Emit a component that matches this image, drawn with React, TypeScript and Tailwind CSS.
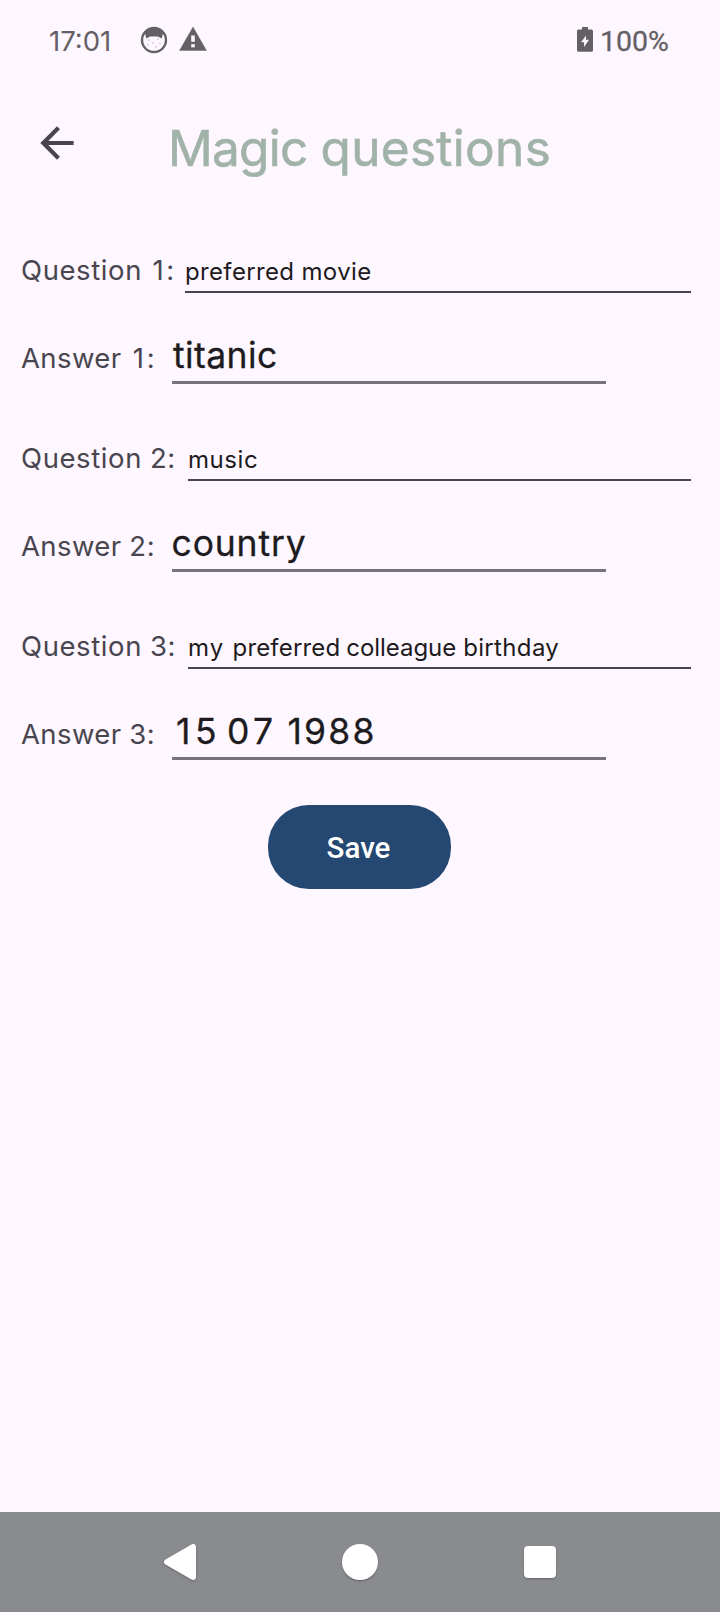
import type { ReactNode } from "react";

type Item = {
  id: string;
  label: ReactNode;
  answerLabel: ReactNode;
  question: ReactNode;
  answer: ReactNode;
  questionClass: string;
  answerClass: string;
};

const items: Item[] = [
  {
    id: "1",
    label: <span className="ml-[2px] tracking-[2.8px]">1:</span>,
    answerLabel: <span className="ml-[3px] tracking-[2.8px]">1:</span>,
    question: "preferred movie",
    answer: "titanic",
    questionClass: "w-[506px] tracking-[0.35px]",
    answerClass: "pl-[1px] tracking-[0.42px]",
  },
  {
    id: "2",
    label: <span className="-ml-[0.5px] tracking-[0.6px]">2:</span>,
    answerLabel: <span className="-ml-[0.5px] tracking-[0.7px]">2:</span>,
    question: "music",
    answer: <span className="-ml-[0.5px]">country</span>,
    questionClass: "w-[503px] tracking-[0.58px]",
    answerClass: "tracking-[0.85px]",
  },
  {
    id: "3",
    label: <span className="-ml-[0.5px] tracking-[0.6px]">3:</span>,
    answerLabel: <span className="-ml-[0.5px] tracking-[0.7px]">3:</span>,
    question: (
      <>
        <span className="tracking-[1.2px]">my</span>{" "}
        <span className="ml-[1px]">preferred</span>{" "}
        <span className="-ml-[1px] tracking-[-0.05px]">colleague</span>{" "}
        <span className="tracking-[0.35px]">birthday</span>
      </>
    ),
    answer: (
      <>
        <span className="tracking-[4.5px]">15</span>{" "}
        <span className="-ml-[4px] tracking-[4.3px]">07</span>{" "}
        <span className="tracking-[2.2px]">1988</span>
      </>
    ),
    questionClass: "w-[503px] tracking-[0.18px]",
    answerClass: "pl-[4px]",
  },
];

const CatIcon = () => (
  <svg width="28" height="28" viewBox="0 0 28 28">
    <circle cx="14" cy="14" r="12" fill="#fef7ff" stroke="#646166" strokeWidth="2.4" />
    <path
      d="M3 9 C7 0.5 21 0.5 25 9 L22.8 8 L21.8 12.5 L17.8 10.5 H10.2 L6.2 12.5 L5.2 8 Z"
      fill="#646166"
    />
    <g fill="#b5b0b6">
      <circle cx="9" cy="14" r="0.8" />
      <circle cx="18" cy="13" r="0.8" />
      <circle cx="13" cy="17" r="0.7" />
      <circle cx="20" cy="17.5" r="0.8" />
      <circle cx="8" cy="19" r="0.7" />
      <circle cx="16" cy="21" r="0.8" />
    </g>
  </svg>
);

const WarningIcon = () => (
  <svg width="28" height="26" viewBox="0 0 28 26">
    <path
      fillRule="evenodd"
      d="M14 1 L27.5 24.5 H0.5 Z M12 9.3 V16 H16 V9.3 Z M12 18 V21.6 H16 V18 Z"
      fill="#646166"
      stroke="#646166"
      strokeWidth="0.4"
      strokeLinejoin="round"
    />
  </svg>
);

const BatteryIcon = () => (
  <svg width="16" height="25" viewBox="0 0 16 25">
    <path
      fillRule="evenodd"
      d="M5 0 H11 V2.6 H14.4 Q16 2.6 16 4.2 V23.2 Q16 24.8 14.4 24.8 H1.6 Q0 24.8 0 23.2 V4.2 Q0 2.6 1.6 2.6 H5 Z M9 8.5 L4 15.3 H7 V20 L12 12.8 H9 Z"
      fill="#646166"
    />
  </svg>
);

const StatusBar = () => (
  <div className="flex h-[84px] items-start pt-[25px] pr-[50px] pl-[49px] text-[#646166]">
    <span className="w-[91px] text-[27.5px] leading-8">17:01</span>
    <div className="flex pt-px">
      <CatIcon />
    </div>
    <div className="ml-[11px] flex pt-px">
      <WarningIcon />
    </div>
    <div className="ml-auto flex">
      <div className="mt-[2px] flex">
        <BatteryIcon />
      </div>
      <span className="ml-[7px] w-[70px] pt-px font-[Roboto] text-[28.5px] leading-8 whitespace-nowrap [-webkit-text-stroke:0.3px]">
        100%
      </span>
    </div>
  </div>
);

const NavigationBar = () => (
  <nav className="flex h-[100px] items-center justify-center gap-[140px] bg-[#8a8b8e]">
    <svg className="overflow-visible drop-shadow-[0_1px_1px_rgba(0,0,0,0.25)]" width="40" height="40" viewBox="0 0 40 40">
      <path d="M7 20 L33 5 V35 Z" fill="#fff" stroke="#fff" strokeWidth="6" strokeLinejoin="round" />
    </svg>
    <div className="mx-[2px] size-9 rounded-full bg-white shadow-[0_1px_2px_rgba(0,0,0,0.3)]" />
    <div className="mx-[4px] size-8 rounded bg-white shadow-[0_1px_2px_rgba(0,0,0,0.3)]" />
  </nav>
);

const QuestionGroup = ({ item }: { item: Item }) => (
  <div className="h-[130px] pl-[21px]">
    <div className="flex h-[39px] justify-between pr-[29px]">
      <label className="text-[27.5px] leading-8 tracking-[0.6px] whitespace-nowrap text-[#49454f]">
        Question {item.label}
      </label>
      <div
        className={`h-[39px] border-b-2 border-[#49454f] pt-[2px] text-[24px] leading-8 whitespace-nowrap text-[#1d1b20] ${item.questionClass}`}
      >
        {item.question}
      </div>
    </div>
    <div className="mt-[42px] flex h-[49px]">
      <label className="w-[151px] pt-[7px] text-[27.5px] leading-8 tracking-[0.4px] whitespace-nowrap text-[#49454f]">
        Answer {item.answerLabel}
      </label>
      <div
        className={`h-[49px] w-[434px] border-b-[3px] border-[#77737b] pt-px text-[35.5px] leading-10 whitespace-nowrap text-[#1d1b20] [-webkit-text-stroke:0.3px] ${item.answerClass}`}
      >
        {item.answer}
      </div>
    </div>
  </div>
);

export default function App() {
  return (
    <div className="flex h-[1612px] w-[720px] flex-col bg-[#fef7ff] font-[Inter,sans-serif]">
      <StatusBar />
      <header className="flex h-[170px] items-start pt-[34px] pl-[32px]">
        <svg width="50" height="50" viewBox="0 0 24 24">
          <path
            d="M20 11H7.83l5.59-5.59L12 4l-8 8 8 8 1.41-1.41L7.83 13H20v-2z"
            fill="#49454f"
          />
        </svg>
        <h1 className="ml-[86px] text-[49.5px] leading-[60px] whitespace-nowrap text-[#a1b3a9] [-webkit-text-stroke:0.6px]">
          <span className="tracking-[-0.7px]">Magic</span>{" "}
          <span className="-ml-px tracking-[0.3px]">questions</span>
        </h1>
      </header>
      <main className="flex flex-1 flex-col">
        <div className="flex flex-col gap-[58px]">
          {items.map((item) => (
            <QuestionGroup key={item.id} item={item} />
          ))}
        </div>
        <button
          type="button"
          className="mt-[45px] ml-[268px] h-[84px] w-[183px] rounded-[41px] bg-[#254872] pt-[3px] pr-[2px] font-[Roboto] text-[29.5px] font-medium text-white"
        >
          Save
        </button>
      </main>
      <NavigationBar />
    </div>
  );
}
